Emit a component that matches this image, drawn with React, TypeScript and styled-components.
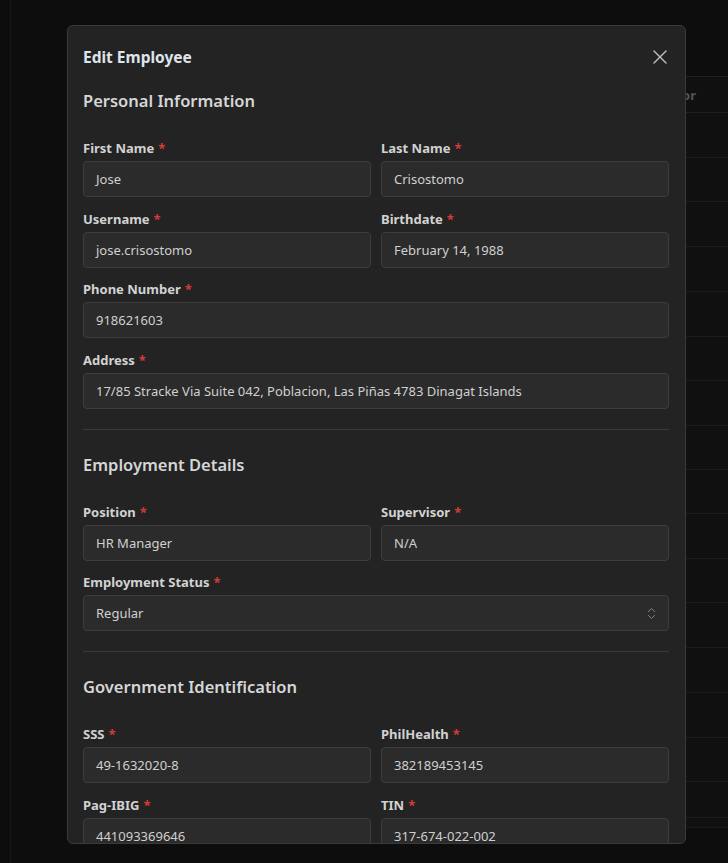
import styled, { createGlobalStyle } from 'styled-components';
import { X, ChevronsUpDown } from 'lucide-react';

const GlobalStyle = createGlobalStyle`
    html, body {
        margin: 0;
        padding: 0;
        background: #0d0d0d;
        font-family: "Noto Sans", "Open Sans", sans-serif;
    }
    * { box-sizing: border-box; }
`;

const Page = styled.div`
    position: relative;
    width: 728px;
    height: 863px;
    overflow: hidden;
    background: #0d0d0d;
`;

const SideRule = styled.div`
    position: absolute;
    left: 10px;
    top: 0;
    bottom: 0;
    width: 1px;
    background: #181818;
`;

const BackTable = styled.div`
    position: absolute;
    left: 560px;
    right: 0;
    top: 76px;
    background: #101010;
`;

const BackHeader = styled.div`
    height: 37px;
    border-top: 1px solid #1f1f1f;
    border-bottom: 1px solid #1f1f1f;
    display: flex;
    align-items: center;
    justify-content: flex-end;
    padding-right: 32px;
    font-size: 13px;
    font-weight: 700;
    color: #555;
`;

const BackRow = styled.div<{ h?: number }>`
    height: ${({ h }) => h ?? 45}px;
    border-bottom: 1px solid #1c1c1c;
`;

const Overlay = styled.div`
    position: absolute;
    inset: 0;
    display: flex;
    justify-content: flex-start;
    padding: 25px 0 0 67px;
`;

const Modal = styled.div`
    width: 619px;
    height: 819px;
    background: #232323;
    border: 1px solid #3a3a3a;
    border-radius: 6px;
    overflow: hidden;
    padding: 0 16px 0 15px;
    color: #d4d4d4;
`;

const ModalHeader = styled.div`
    display: flex;
    align-items: center;
    justify-content: space-between;
    padding-top: 21px;
    height: 41px;
`;

const Title = styled.h2`
    margin: 0;
    font-size: 15.5px;
    font-weight: 700;
    line-height: 20px;
    color: #dfe4ea;
`;

const CloseButton = styled.button`
    border: none;
    background: none;
    padding: 0;
    margin-right: -3px;
    width: 24px;
    height: 24px;
    display: flex;
    color: #bdbdbd;
    cursor: pointer;
`;

const Section = styled.section<{ first?: boolean }>`
    padding-top: ${({ first }) => (first ? 22 : 23)}px;
    padding-bottom: 20px;
    border-bottom: 1px solid #3a3a3a;
`;

const SectionTitle = styled.h3`
    margin: 0 0 26px;
    font-size: 16.5px;
    font-weight: 600;
    line-height: 24px;
    color: #d6d6d6;
`;

const Grid = styled.div`
    display: grid;
    grid-template-columns: 1fr 1fr;
    column-gap: 10px;
    row-gap: 12.5px;
`;

const Field = styled.div<{ full?: boolean }>`
    display: flex;
    flex-direction: column;
    gap: 4px;
    grid-column: ${({ full }) => (full ? '1 / -1' : 'auto')};
`;

const Label = styled.label`
    font-size: 13px;
    font-weight: 700;
    line-height: 18px;
    color: #d2d2d2;
`;

const Required = styled.span`
    color: #d33a3a;
    margin-left: 4px;
`;

const Input = styled.div`
    height: 36px;
    display: flex;
    align-items: center;
    justify-content: space-between;
    padding: 0 9px 0 12px;
    background: #2b2b2b;
    border: 1px solid #3d3d3d;
    border-radius: 4px;
    font-size: 13px;
    color: #d0d0d0;
    white-space: nowrap;
`;

const SelectIcon = styled.span`
    display: flex;
    color: #8a8a8a;
`;

type FieldDef = { label: string; value: string; full?: boolean; select?: boolean };

const sections: { title: string; fields: FieldDef[] }[] = [
    {
        title: 'Personal Information',
        fields: [
            { label: 'First Name', value: 'Jose' },
            { label: 'Last Name', value: 'Crisostomo' },
            { label: 'Username', value: 'jose.crisostomo' },
            { label: 'Birthdate', value: 'February 14, 1988' },
            { label: 'Phone Number', value: '918621603', full: true },
            { label: 'Address', value: '17/85 Stracke Via Suite 042, Poblacion, Las Piñas 4783 Dinagat Islands', full: true },
        ],
    },
    {
        title: 'Employment Details',
        fields: [
            { label: 'Position', value: 'HR Manager' },
            { label: 'Supervisor', value: 'N/A' },
            { label: 'Employment Status', value: 'Regular', full: true, select: true },
        ],
    },
    {
        title: 'Government Identification',
        fields: [
            { label: 'SSS', value: '49-1632020-8' },
            { label: 'PhilHealth', value: '382189453145' },
            { label: 'Pag-IBIG', value: '441093369646' },
            { label: 'TIN', value: '317-674-022-002' },
        ],
    },
];

const rowHeights = [45, 44, 45, 45, 45, 44, 45, 44, 44, 45, 44, 45, 45, 45, 44, 36, 10];

export default function App() {
    return (
        <Page>
            <GlobalStyle />
            <SideRule />
            <BackTable>
                <BackHeader>or</BackHeader>
                {rowHeights.map((h, i) => (
                    <BackRow key={i} h={h} />
                ))}
            </BackTable>
            <Overlay>
                <Modal>
                    <ModalHeader>
                        <Title>Edit Employee</Title>
                        <CloseButton aria-label="Close">
                            <X size={24} strokeWidth={1.4} />
                        </CloseButton>
                    </ModalHeader>
                    {sections.map((s, i) => (
                        <Section key={s.title} first={i === 0}>
                            <SectionTitle>{s.title}</SectionTitle>
                            <Grid>
                                {s.fields.map((f) => (
                                    <Field key={f.label} full={f.full}>
                                        <Label>
                                            {f.label}
                                            <Required>*</Required>
                                        </Label>
                                        <Input>
                                            <span>{f.value}</span>
                                            {f.select && (
                                                <SelectIcon>
                                                    <ChevronsUpDown size={15} strokeWidth={1.5} />
                                                </SelectIcon>
                                            )}
                                        </Input>
                                    </Field>
                                ))}
                            </Grid>
                        </Section>
                    ))}
                </Modal>
            </Overlay>
        </Page>
    );
}
